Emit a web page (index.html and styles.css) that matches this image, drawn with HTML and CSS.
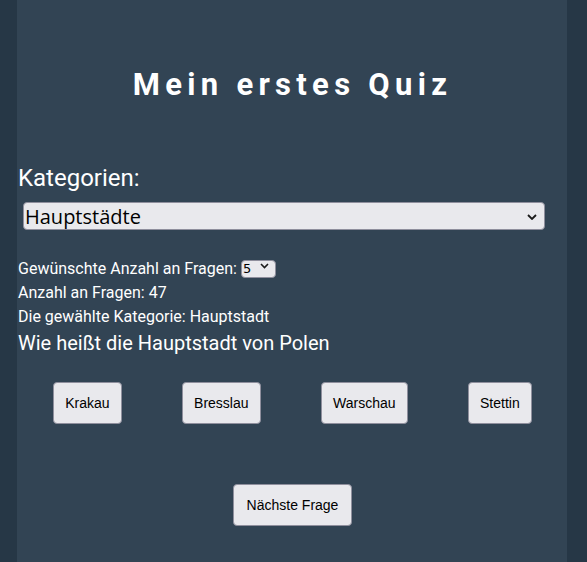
FILE: index.html
```html
<!DOCTYPE html>
<html lang="de">
<head>
<meta charset="utf-8">
<title>Mein erstes Quiz</title>
<link rel="stylesheet" href="styles.css">
</head>
<body>
<div class="quiz">
  <h1 class="title">Mein erstes Quiz</h1>
  <div class="cat-label">Kategorien:</div>
  <div class="select-wrap big">
    <select class="cat-select">
      <option>Hauptstädte</option>
    </select>
    <svg class="chev" width="10" height="6" viewBox="0 0 10 6"><path d="M1 1 L5 5 L9 1" fill="none" stroke="#1a1a1a" stroke-width="1.8"/></svg>
  </div>
  <div class="info">
    <div class="line">Gewünschte Anzahl an Fragen: <span class="select-wrap small"><select class="num-select"><option>5</option></select><svg class="chev" width="9" height="6" viewBox="0 0 9 6"><path d="M1 1 L4.5 4.5 L8 1" fill="none" stroke="#1a1a1a" stroke-width="1.6"/></svg></span></div>
    <div class="line">Anzahl an Fragen: 47</div>
    <div class="line">Die gewählte Kategorie: Hauptstadt</div>
  </div>
  <div class="question">Wie heißt die Hauptstadt von Polen</div>
  <div class="answers">
    <button class="btn">Krakau</button>
    <button class="btn">Bresslau</button>
    <button class="btn">Warschau</button>
    <button class="btn">Stettin</button>
  </div>
  <div class="next">
    <button class="btn btn-next">Nächste Frage</button>
  </div>
</div>
</body>
</html>
```
FILE: styles.css
```css
html, body {
  margin: 0;
  padding: 0;
}
body {
  background: #263746;
  font-family: Roboto, "Liberation Sans", sans-serif;
  color: #ffffff;
}
.quiz {
  background: #324454;
  width: 550px;
  margin-left: 17px;
  min-height: 562px;
  box-sizing: border-box;
  padding: 67px 0 0 1px;
}
.title {
  margin: 0;
  font-size: 31px;
  line-height: 36px;
  font-weight: 700;
  letter-spacing: 5.3px;
  text-align: center;
}
.cat-label {
  margin-top: 62px;
  font-size: 24px;
  line-height: 26px;
}
.select-wrap {
  position: relative;
  display: inline-block;
}
.select-wrap.big {
  display: block;
  margin: 11px 0 0 5px;
  width: 522px;
}
.cat-select {
  appearance: none;
  -webkit-appearance: none;
  width: 522px;
  height: 28px;
  margin: 0;
  padding: 0 0 0 1px;
  font-family: "Open Sans", "Noto Sans", sans-serif;
  font-size: 20px;
  color: #000;
  background: #e9e9ed;
  border: 1px solid #8f8f9d;
  border-radius: 4px;
}
.chev {
  position: absolute;
  pointer-events: none;
}
.big .chev {
  right: 8px;
  top: 12px;
}
.info {
  margin-top: 26px;
  font-size: 16px;
  line-height: 24px;
}
.small {
  vertical-align: 1px;
}
.num-select {
  appearance: none;
  -webkit-appearance: none;
  width: 35px;
  height: 18px;
  margin: 0;
  padding: 0 0 0 1px;
  font-family: "DejaVu Sans", sans-serif;
  font-size: 13px;
  line-height: 16px;
  color: #000;
  background: #e9e9ed;
  border: 1px solid #8f8f9d;
  border-radius: 4px;
  vertical-align: middle;
}
.small .chev {
  right: 7px;
  top: 7px;
}
.question {
  margin-top: 2px;
  font-size: 20px;
  line-height: 24px;
}
.answers {
  display: flex;
  justify-content: space-around;
  padding: 0 5px;
  margin-top: 27px;
}
.btn {
  font-family: "Liberation Sans", Arial, sans-serif;
  font-size: 14px;
  line-height: 18px;
  color: #000;
  background: #e9e9ed;
  border: 1px solid #8f8f9d;
  border-radius: 4px;
  padding: 11px 11px;
  margin: 0;
}
.btn-next {
  padding: 11px 13px;
}
.next {
  display: flex;
  justify-content: center;
  margin-top: 60px;
}
```
